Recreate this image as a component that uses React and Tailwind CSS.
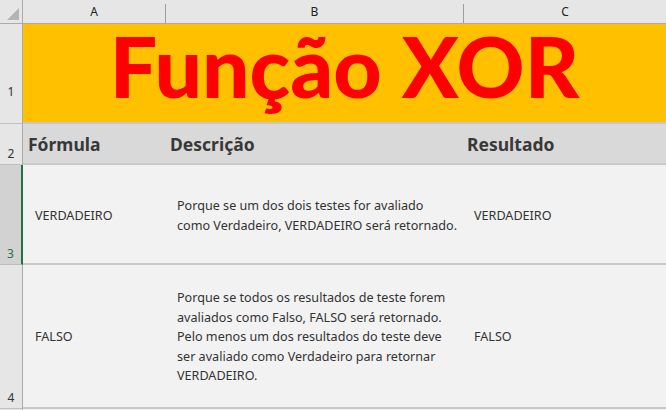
export default function App() {
  const rowHead = "w-[23px] shrink-0 bg-[#e6e6e6] border-r border-[#ababab] flex items-end justify-center pb-[1px] text-[12px] text-[#333]";
  return (
    <div className="w-[666px] h-[410px] overflow-hidden bg-[#f2f2f2] flex flex-col" style={{ fontFamily: '"Noto Sans", "Open Sans", sans-serif' }}>
      {/* column header */}
      <div className="h-[24px] shrink-0 flex bg-[#e6e6e6] border-b border-[#ababab] text-[12px] text-[#222]">
        <div className="w-[23px] shrink-0 border-r border-[#ababab] flex items-end justify-end p-[3px]">
          <svg width="12" height="12" viewBox="0 0 12 12"><polygon points="12,0 12,12 0,12" fill="#b4b4b4" /></svg>
        </div>
        <div className="w-[142px] shrink-0 flex items-center justify-center">A</div>
        <div className="w-px h-[19px] self-end bg-[#9e9e9e]" />
        <div className="w-[297px] shrink-0 flex items-center justify-center">B</div>
        <div className="w-px h-[19px] self-end bg-[#9e9e9e]" />
        <div className="flex-1 flex items-center justify-center">C</div>
      </div>
      {/* row 1 */}
      <div className="h-[100px] shrink-0 flex">
        <div className="w-[23px] shrink-0 bg-[#e6e6e6] border-r border-[#ababab] border-b border-b-[#c0c0c0] flex items-end justify-center pb-[22px] text-[12px] text-[#333]">1</div>
        <div className="flex-1 bg-[#ffc000] border-b-2 border-[#c8c8c8] flex items-center justify-center">
          <span className="text-[#ff0000] font-black text-[84px] leading-none pb-[14px]" style={{ fontFamily: 'Lato, sans-serif' }}>Função XOR</span>
        </div>
      </div>
      {/* row 2 */}
      <div className="h-[41px] shrink-0 flex">
        <div className={rowHead + " border-b border-b-[#c0c0c0]"}>2</div>
        <div className="flex-1 flex bg-[#d9d9d9] border-b-2 border-[#c8c8c8] items-end pb-[6px] text-[17.5px] font-bold text-[#383838]">
          <div className="w-[143px] pl-[5px]">Fórmula</div>
          <div className="w-[298px] pl-[4px]">Descrição</div>
          <div className="flex-1 pl-[3px]">Resultado</div>
        </div>
      </div>
      {/* row 3 */}
      <div className="h-[100px] shrink-0 flex">
        <div className="w-[23px] shrink-0 bg-[#d2d2d2] border-r-2 border-[#217346] border-b border-b-[#bcbcbc] flex items-end justify-center pb-[1px] text-[12px] text-[#217346]">3</div>
        <div className="flex-1 flex items-center border-b-2 border-[#c8c8c8] text-[12.6px] text-[#333] leading-[20px] pt-[3px]">
          <div className="w-[142px] pl-[12px]">VERDADEIRO</div>
          <div className="w-[298px] pl-[12px]">Porque se um dos dois testes for avaliado<br />como Verdadeiro, VERDADEIRO será retornado.</div>
          <div className="flex-1 pl-[11px]">VERDADEIRO</div>
        </div>
      </div>
      {/* row 4 */}
      <div className="h-[144px] shrink-0 flex">
        <div className={rowHead + " border-b border-b-[#c0c0c0]"}>4</div>
        <div className="flex-1 flex items-center border-b-2 border-[#c8c8c8] text-[12.6px] text-[#333] leading-[19.5px] pt-[2px]">
          <div className="w-[142px] pl-[12px]">FALSO</div>
          <div className="w-[298px] pl-[12px]">Porque se todos os resultados de teste forem<br />avaliados como Falso, FALSO será retornado.<br />Pelo menos um dos resultados do teste deve<br />ser avaliado como Verdadeiro para retornar<br />VERDADEIRO.</div>
          <div className="flex-1 pl-[11px]">FALSO</div>
        </div>
      </div>
      <div className="flex-1 flex">
        <div className="w-[23px] shrink-0 bg-[#e6e6e6] border-r border-[#ababab]" />
      </div>
    </div>
  );
}
